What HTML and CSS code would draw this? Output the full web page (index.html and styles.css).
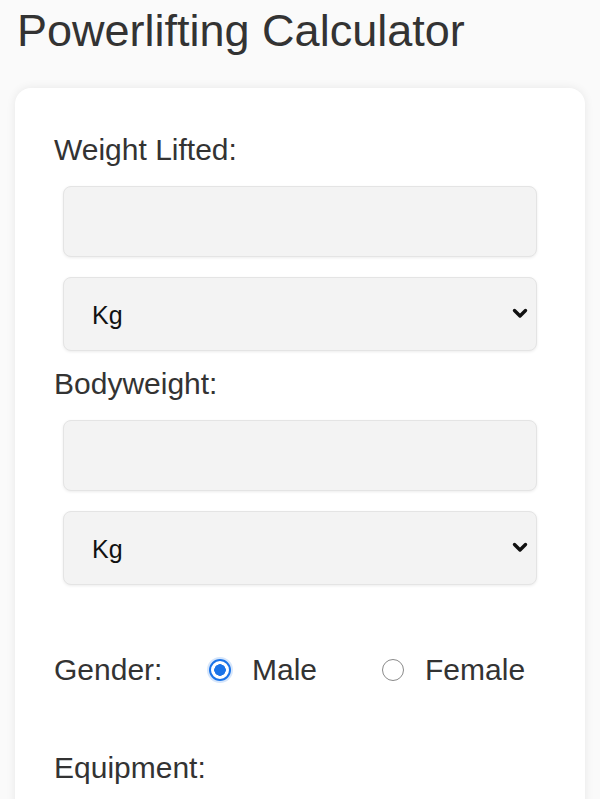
FILE: index.html
```html
<!DOCTYPE html>
<html lang="en">
<head>
<meta charset="utf-8">
<title>Powerlifting Calculator</title>
<link rel="stylesheet" href="styles.css">
</head>
<body>
<h1 class="title">Powerlifting Calculator</h1>
<form class="card">
  <label class="field-label" for="lifted">Weight Lifted:</label>
  <div class="controls">
    <input class="text-input" id="lifted" type="text">
    <div class="select-wrap">
      <select class="unit-select"><option>Kg</option><option>Lbs</option></select>
      <svg class="chevron" viewBox="0 0 16 11" width="16" height="11"><path d="M2.5 2.5 L8 8 L13.5 2.5" fill="none" stroke="#111" stroke-width="3.4" stroke-linecap="round" stroke-linejoin="round"/></svg>
    </div>
  </div>
  <label class="field-label" for="body">Bodyweight:</label>
  <div class="controls">
    <input class="text-input" id="body" type="text">
    <div class="select-wrap">
      <select class="unit-select"><option>Kg</option><option>Lbs</option></select>
      <svg class="chevron" viewBox="0 0 16 11" width="16" height="11"><path d="M2.5 2.5 L8 8 L13.5 2.5" fill="none" stroke="#111" stroke-width="3.4" stroke-linecap="round" stroke-linejoin="round"/></svg>
    </div>
  </div>
  <div class="gender-row">
    <span class="gender-label">Gender:</span>
    <label class="radio-option"><input class="radio" type="radio" name="gender" checked> Male</label>
    <label class="radio-option"><input class="radio" type="radio" name="gender"> Female</label>
  </div>
  <div class="field-label equipment">Equipment:</div>
</form>
</body>
</html>
```
FILE: styles.css
```css
html, body {
  margin: 0;
  padding: 0;
}
body {
  background: #fafafa;
  font-family: "Liberation Sans", Arial, sans-serif;
  color: #333;
  padding: 0 15px;
}
.title {
  font-size: 45px;
  font-weight: normal;
  line-height: 52px;
  margin: 5px 0 0 2px;
  color: #333;
}
.card {
  margin-top: 31px;
  background: #fff;
  border-radius: 16px;
  box-shadow: 0 0 10px rgba(0, 0, 0, 0.08);
  padding: 44px 39px 60px;
  display: flex;
  flex-direction: column;
}
.field-label {
  display: block;
  font-size: 30px;
  line-height: 36px;
  color: #333;
}
.controls {
  display: flex;
  flex-direction: column;
  gap: 20px;
  margin: 18px 9px 0;
}
.controls + .field-label {
  margin-top: 15px;
}
.text-input {
  height: 71px;
  box-sizing: border-box;
  border: 1px solid #e4e4e4;
  border-radius: 8px;
  background: #f3f3f3;
  box-shadow: 0 1px 3px rgba(0, 0, 0, 0.08);
  font-size: 24px;
  padding: 0 26px;
  font-family: inherit;
}
.select-wrap {
  position: relative;
}
.unit-select {
  -webkit-appearance: none;
  appearance: none;
  width: 100%;
  height: 74px;
  box-sizing: border-box;
  border: 1px solid #e4e4e4;
  border-radius: 8px;
  background: #f3f3f3;
  box-shadow: 0 1px 3px rgba(0, 0, 0, 0.08);
  font-family: inherit;
  font-size: 25px;
  color: #111;
  padding: 2px 28px 0;
}
.chevron {
  position: absolute;
  right: 9px;
  top: 31px;
  pointer-events: none;
}
.gender-row {
  display: flex;
  align-items: center;
  margin-top: 67px;
}
.gender-label {
  flex: 0 0 155px;
  font-size: 30px;
  line-height: 36px;
  color: #333;
}
.radio-option {
  flex: 0 0 auto;
  display: flex;
  align-items: center;
  font-size: 30px;
  line-height: 36px;
  color: #333;
  margin-right: 65px;
}
.radio-option:last-child {
  margin-right: 0;
}
.radio {
  -webkit-appearance: none;
  appearance: none;
  flex: 0 0 auto;
  width: 22px;
  height: 22px;
  margin: 0 21px 0 0;
  border: 1.5px solid #8a8a8a;
  border-radius: 50%;
  background: #fff;
  box-sizing: border-box;
}
.radio:checked {
  border: 2px solid #1a73e8;
  background: radial-gradient(circle, #1a73e8 0 5.5px, #fff 6px);
  box-shadow: 0 0 0 2px #d6e6fb;
}
.equipment {
  margin-top: 62px;
}
```
